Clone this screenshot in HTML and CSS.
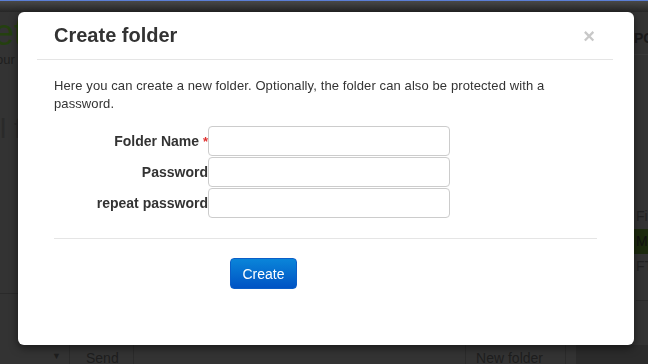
FILE: index.html
```html
<!DOCTYPE html>
<html lang="en">
<head>
  <meta charset="UTF-8" />
  <title>Create folder</title>
  <link rel="stylesheet" href="styles.css">
</head>
<body>

  <!-- page behind the dimmed backdrop -->
  <div class="topbar"></div>
  <div class="page">
    <div class="side-left">
      <div class="logo">et</div>
      <div class="tagline">our</div>
      <div class="heading">l f</div>
      <div class="rule-left"></div>
    </div>
    <div class="side-right">
      <div class="nav-item">PO</div>
      <div class="list">
        <div class="list-row">Fi</div>
        <div class="list-row active">M</div>
        <div class="list-row">FT</div>
      </div>
    </div>
  </div>
  <div class="bottombar">
    <div class="bb-select">&#9660;</div>
    <div class="bb-btn">Send</div>
    <div class="bb-spacer"></div>
    <div class="bb-btn bb-new">New folder</div>
    <div class="bb-gap"></div>
    <div class="bb-dark"></div>
  </div>

  <!-- modal -->
  <div class="modal">
    <div class="modal-header">
      <h3>Create folder</h3>
      <span class="close">&times;</span>
    </div>
    <div class="modal-body">
      <p>Here you can create a new folder. Optionally, the folder can also be protected with a password.</p>
      <div class="form-grid">
        <label>Folder Name <span class="req">*</span></label>
        <input type="text">
        <label>Password</label>
        <input type="password">
        <label>repeat password</label>
        <input type="password">
      </div>
      <div class="modal-footer">
        <button class="btn-create">Create</button>
      </div>
    </div>
  </div>

</body>
</html>
```

FILE: styles.css
```css
/* ---------------- GENERAL ---------------- */
html, body {
  margin: 0;
  height: 100%;
  overflow: hidden;
  background: #333333;
  font-family: 'Liberation Sans', Arial, sans-serif;
  color: #333;
}

/* ---------------- DIMMED PAGE ---------------- */
.topbar {
  height: 11px;
  border-top: 1px solid #5b7fd6;
  background: linear-gradient(#484848, #262626);
}

.page {
  display: flex;
  justify-content: space-between;
  height: 333px;
}

.side-left {
  width: 60px;
  overflow: hidden;
}

.logo {
  margin: 6px 0 0 -6px;
  font-size: 36px;
  line-height: 30px;
  color: #24400f;
}

.tagline {
  margin: 4px 0 0 -4px;
  font-size: 13px;
  line-height: 15px;
  color: #1f1f1f;
}

.heading {
  margin-top: 46px;
  font-size: 28px;
  color: #2a2a2a;
}

.rule-left {
  margin-top: 148px;
  border-top: 1px solid #2a2a2a;
}

.side-right {
  width: 72px;
  padding-left: 60px;
  box-sizing: border-box;
  overflow: hidden;
}

.nav-item {
  padding: 18px 0 8px;
  font-weight: bold;
  font-size: 14px;
  color: #1a1a1a;
  border-bottom: 1px solid #3a3a3a;
  margin-left: -2px;
}

.list {
  margin-top: 149px;
  border-bottom: 1px solid #2b2b2b;
  padding-bottom: 21px;
}

.list-row {
  height: 25px;
  font-size: 14px;
  line-height: 25px;
  color: #222;
}

.list-row.active {
  background: #1c2a0e;
  margin: 0 0 0 -4px;
  padding-left: 4px;
  color: #111;
}

.bottombar {
  display: flex;
  height: 19px;
  font-size: 14px;
  color: #1e1e1e;
}

.bb-select {
  width: 70px;
  box-sizing: border-box;
  text-align: right;
  padding: 6px 8px 0 0;
  font-size: 9px;
  border-right: 1px solid #2b2b2b;
}

.bb-btn {
  padding: 5px 14px 0 16px;
  border-right: 1px solid #2b2b2b;
}

.bb-spacer {
  flex: 1;
  border-right: 1px solid #2b2b2b;
}

.bb-new {
  padding: 5px 22px 0 10px;
}

.bb-gap {
  width: 10px;
}

.bb-dark {
  width: 72px;
  background: #2b2b2b;
}

/* ---------------- MODAL ---------------- */
.modal {
  position: fixed;
  top: 12px;
  left: 18px;
  width: 616px;
  height: 333px;
  background: #fff;
  border-radius: 6px;
  box-shadow: 0 3px 9px rgba(0, 0, 0, 0.5);
}

.modal-header {
  display: flex;
  align-items: center;
  justify-content: space-between;
  height: 47px;
  margin: 0 21px 0 19px;
  padding: 0 17px;
  border-bottom: 1px solid #e5e5e5;
}

.modal-header h3 {
  margin: 0;
  font-size: 20px;
  font-weight: bold;
  color: #333;
}

.close {
  font-size: 20px;
  font-weight: bold;
  color: #c8c8c8;
  margin: 1px 1px 0 0;
}

.modal-body {
  margin: 0 37px 0 36px;
}

.modal-body p {
  margin: 17px 0 12px;
  font-size: 13px;
  line-height: 18px;
  letter-spacing: 0.1px;
  color: #333;
}

.form-grid {
  display: grid;
  grid-template-columns: 154px 242px;
  grid-auto-rows: 31px;
  align-items: center;
}

.form-grid label {
  text-align: right;
  font-size: 14px;
  font-weight: bold;
  color: #333;
}

.req {
  color: #e0312f;
  font-size: 13px;
}

.form-grid input {
  box-sizing: border-box;
  height: 30px;
  width: 242px;
  margin: 0;
  border: 1px solid #ccc;
  border-radius: 4px;
  background: #fff;
}

.modal-footer {
  margin-top: 20px;
  padding-top: 19px;
  border-top: 1px solid #e5e5e5;
}

.btn-create {
  margin-left: 176px;
  width: 67px;
  height: 31px;
  padding: 0;
  font-family: 'Liberation Sans', Arial, sans-serif;
  font-size: 14px;
  color: #fff;
  border: 1px solid #0b5ec7;
  border-radius: 4px;
  background: linear-gradient(#0a85d9, #0053c4);
}
```
